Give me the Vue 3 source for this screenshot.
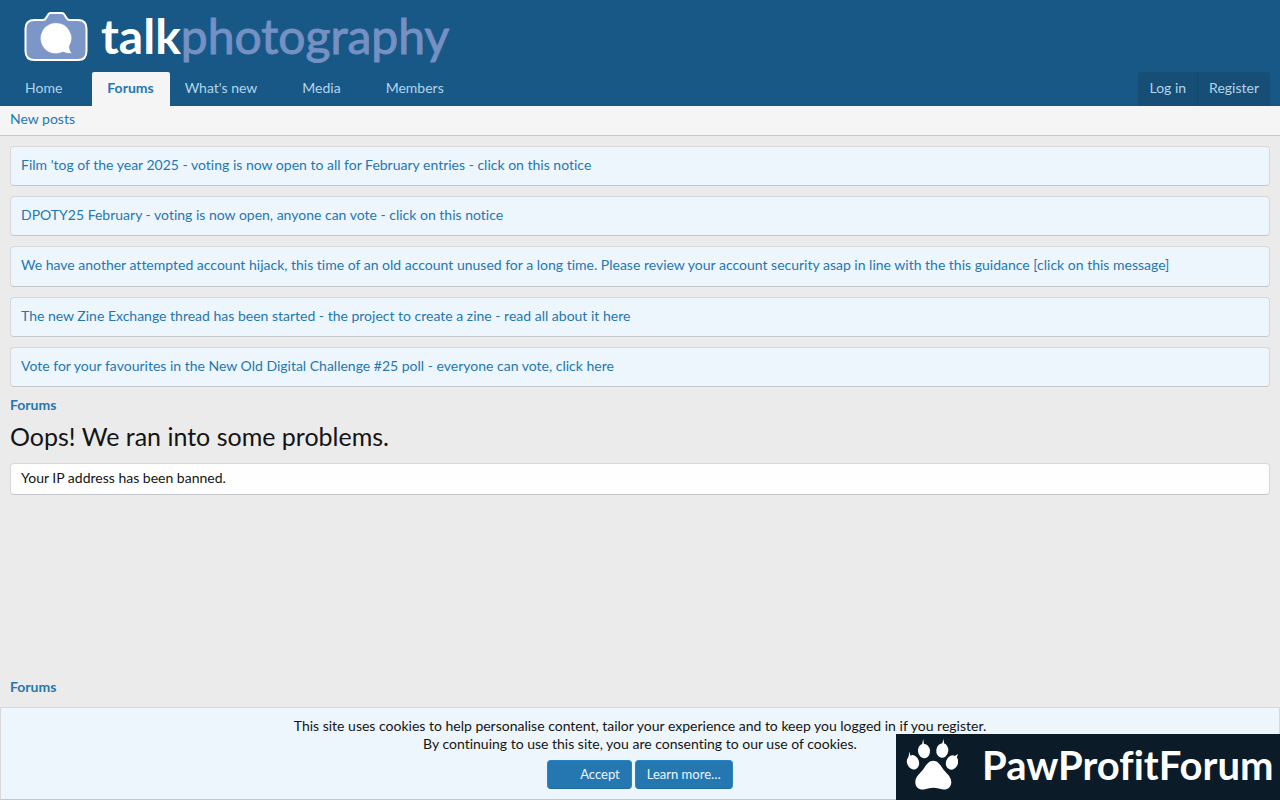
<script setup>
const tabs = [
  { label: 'Home' },
  { label: 'Forums', active: true },
  { label: "What's new" },
  { label: 'Media' },
  { label: 'Members' },
]
const notices = [
  "Film 'tog of the year 2025 - voting is now open to all for February entries - click on this notice",
  'DPOTY25 February - voting is now open, anyone can vote - click on this notice',
  'We have another attempted account hijack, this time of an old account unused for a long time. Please review your account security asap in line with the this guidance [click on this message]',
  'The new Zine Exchange thread has been started - the project to create a zine - read all about it here',
  'Vote for your favourites in the New Old Digital Challenge #25 poll - everyone can vote, click here',
]
</script>

<template>
  <div class="page">
    <header class="header">
      <a class="logo" href="#" aria-label="talkphotography">
        <svg class="camera" viewBox="0 0 64 50" aria-hidden="true">
          <path d="M10.500 9H19Q21 9 22 7L24.500 3Q25 2 26.500 2H38Q39.500 2 40 3L42.500 7Q43.500 9 45.500 9H54Q62.500 9 62.500 17.500V40Q62.500 49 54 49H10.500Q1.500 49 1.500 40V17.500Q1.500 9 10.500 9Z" fill="#7c96c8" stroke="#fff" stroke-width="2" />
          <path d="M32 11.800A15.500 15.500 0 1 0 39 41Q43.500 43 48.300 42.500Q45.500 40 45.300 35.500A15.500 15.500 0 0 0 32 11.800Z" fill="#fff" stroke="#657eb4" stroke-width=".5" />
        </svg>
        <span class="wordmark"><b>talk</b><span>photography</span></span>
      </a>
      <nav class="nav">
        <a v-for="t in tabs" :key="t.label" href="#" class="tab" :class="{ active: t.active }">{{ t.label }}</a>
        <div class="account">
          <a href="#">Log in</a>
          <a href="#">Register</a>
        </div>
      </nav>
    </header>
    <div class="subnav"><a href="#">New posts</a></div>

    <main class="body">
      <ul class="notices">
        <li v-for="n in notices" :key="n"><a href="#">{{ n }}</a></li>
      </ul>
      <a class="crumb" href="#">Forums</a>
      <h1>Oops! We ran into some problems.</h1>
      <div class="message">Your IP address has been banned.</div>
      <a class="crumb bottom" href="#">Forums</a>
    </main>

    <section class="cookies">
      <p>This site uses cookies to help personalise content, tailor your experience and to keep you logged in if you register.</p>
      <p>By continuing to use this site, you are consenting to our use of cookies.</p>
      <div class="buttons">
        <button type="button" class="accept">Accept</button>
        <button type="button">Learn more…</button>
      </div>
    </section>

    <div class="badge">
      <svg class="paw" viewBox="0 0 52 52" fill="#fff" aria-hidden="true">
        <ellipse cx="7" cy="23.300" rx="6" ry="7.300" transform="rotate(-20 7 23.300)" />
        <ellipse cx="18" cy="12" rx="6" ry="7.300" transform="rotate(-6 18 12)" />
        <ellipse cx="36.300" cy="11.500" rx="6" ry="7.300" transform="rotate(8 36.300 11.500)" />
        <ellipse cx="46" cy="23.500" rx="6" ry="7.300" transform="rotate(20 46 23.500)" />
        <path d="M2.500 19L3.300 12.500L4.500 17.500ZM15.800 6.500L17.200 0L18 5.500ZM36 5.500L37.400 0L38.500 6ZM48 17.500L52 15L50.500 19.500Z" />
        <path d="M27.300 21.700C31 21.700 33.500 24.500 36 28.500C39.500 34 45.300 37 45.300 43C45.300 48.500 41 51.500 36 50.300C30 48.300 24.500 48.300 19 50.300C13.500 51.500 9.300 48.500 9.300 43.300C9.300 37 15 34 18.500 28.500C21 24.500 23.500 21.700 27.300 21.700Z" />
      </svg>
      <span>PawProfitForum</span>
    </div>
  </div>
</template>

<style>
html,
body {
  background: #ebebeb;
}
</style>

<style scoped>
.page {
  min-height: 100vh;
  font: 14px/18px Lato, "Open Sans", sans-serif;
  font-variant-ligatures: none;
  color: #141414;
}
.page * {
  box-sizing: border-box;
}
a {
  color: #2577b1;
  text-decoration: none;
}
.header {
  background: #185886;
}
.logo {
  display: flex;
  align-items: center;
  gap: 13px;
  height: 72px;
  padding-left: 24px;
}
.camera {
  width: 64px;
  height: 50px;
}
.wordmark {
  font-size: 48px;
  line-height: 72px;
  color: #7590c3;
  -webkit-text-stroke: 1px #7590c3;
}
.wordmark b {
  color: #fff;
  -webkit-text-stroke: 0;
}
.nav {
  display: flex;
  height: 34px;
  padding: 0 10px;
}
.tab {
  padding: 0 15px;
  margin-right: 15px;
  line-height: 32px;
  color: #b1d5ec;
}
.tab.active {
  margin-right: 0;
  padding: 0 16px 0 15px;
  border-radius: 2px 2px 0 0;
  background: #f5f5f5;
  color: #2577b1;
  font-weight: 700;
}
.account {
  display: flex;
  margin-left: auto;
  border-radius: 4px 4px 0 0;
  background: #174e75;
}
.account a {
  padding: 0 11px;
  line-height: 32px;
  color: #b1d5ec;
}
.account a + a {
  border-left: 1px solid #164666;
}
.subnav {
  height: 30px;
  padding: 0 10px;
  border-bottom: 1px solid #c8c8c8;
  background: #f5f5f5;
  line-height: 26px;
}
.body {
  padding: 10px;
}
.notices {
  display: grid;
  gap: 10px;
  min-height: 241px;
  margin: 0;
  padding: 0;
  list-style: none;
}
.notices li,
.message {
  padding: 9px 10px 11px;
  border: 1px solid #d8d8d8;
  border-bottom-color: #c4c7ca;
  border-radius: 4px;
  background: #edf6fd;
}
.crumb {
  display: block;
  margin-top: 9px;
  font-weight: 700;
}
h1 {
  margin: 7px 0 12px;
  font-size: 25px;
  line-height: 30px;
  font-weight: 400;
}
.message {
  padding: 5px 10px 7px;
  background: #fefefe;
}
.crumb.bottom {
  margin-top: 183px;
}
.cookies {
  position: fixed;
  left: 0;
  right: 0;
  bottom: 0;
  padding: 9px 10px 10px;
  border: 1px solid #d8d8d8;
  border-bottom-color: #c4c7ca;
  background: #edf6fd;
  text-align: center;
}
.cookies p {
  margin: 0;
}
.buttons {
  display: flex;
  justify-content: center;
  gap: 3px;
  margin-top: 7px;
}
button {
  height: 29px;
  padding: 0 11px 2px;
  border: 1px solid #2a84c4;
  border-bottom-color: #20699c;
  border-radius: 4px;
  background: #2577b1;
  color: #edf6fd;
  font: inherit;
  font-size: 13px;
}
.accept {
  padding-left: 32px;
}
.badge {
  position: fixed;
  right: 0;
  bottom: 0;
  display: flex;
  align-items: center;
  gap: 24px;
  width: 384px;
  height: 66px;
  padding: 0 0 4px 10px;
  background: #0b1b28;
  color: #fff;
  font-size: 40px;
  font-weight: 700;
  white-space: nowrap;
}
.paw {
  flex: none;
  width: 52px;
  height: 52px;
}
</style>
